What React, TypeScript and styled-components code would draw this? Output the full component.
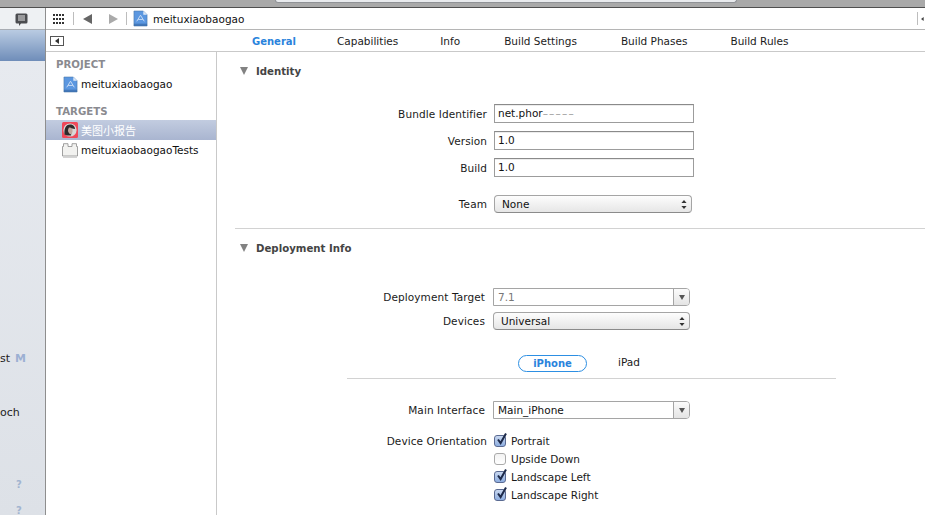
import React from "react";
import styled, { createGlobalStyle } from "styled-components";

const Global = createGlobalStyle`
  html, body { margin: 0; padding: 0; background: #fff; overflow: hidden; }
  body { font-family: "DejaVu Sans", "Noto Sans CJK SC", sans-serif; font-size: 10.5px; color: #1a1a1a; }
  #root { width: 925px; height: 515px; overflow: hidden; }
`;

const Page = styled.div`
  width: 925px; height: 515px; display: flex; flex-direction: column; overflow: hidden;
`;
const TitleStrip = styled.div`
  height: 8px; flex: none; background: #a9a9a9; border-bottom: 1px solid #4f4f4f; box-sizing: border-box; padding-left: 275px;
`;
const TitleField = styled.div`
  width: 462px; height: 3px; background: #e9ebee; border: 1px solid #8f9296; border-top: 0; border-radius: 0 0 3px 3px; box-sizing: border-box;
`;
const Body = styled.div`
  flex: 1; display: flex; min-height: 0;
`;
const Rail = styled.aside`
  width: 46px; flex: none; box-sizing: border-box; border-right: 1px solid #8e8e8e; display: flex; flex-direction: column;
  background: linear-gradient(#e8ebf0, #dde1e7); overflow: hidden;
`;
const RailTop = styled.div`
  height: 22px; flex: none; background: #eef1f3; display: flex; align-items: center; justify-content: center; padding: 3px 2px 0 0; border-bottom: 1px solid #a8adb3; box-sizing: border-box;
`;
const RailSelection = styled.div`
  height: 31px; flex: none; background: linear-gradient(#b9cbe2, #6f8db9);
`;
const RailText = styled.div<{ $top: number }>`
  margin-top: ${(p) => p.$top}px; display: flex; gap: 5px; height: 14px; line-height: 14px; white-space: nowrap; color: #222; font-size: 11px;
`;
const RailBadge = styled.span`
  color: #9cb0d3; font-weight: bold;
`;
const RailHelp = styled.div<{ $top: number }>`
  margin-top: ${(p) => p.$top}px; height: 14px; line-height: 14px; padding-left: 16px; color: #a2b4d0; font-weight: bold; font-size: 10px;
`;
const Main = styled.div`
  flex: 1; display: flex; flex-direction: column; min-width: 0;
`;
const Toolbar = styled.div`
  height: 22px; flex: none; display: flex; align-items: center; box-sizing: border-box; border-bottom: 1px solid #b5b5b5; padding-left: 7px;
`;
const Sep = styled.div<{ $l: number; $r: number }>`
  width: 1px; height: 13px; background: #bdbdbd; margin: 0 ${(p) => p.$r}px 0 ${(p) => p.$l}px;
`;
const Crumb = styled.span`
  color: #111; margin-left: 5px;
`;
const ToolbarEnd = styled.div`
  margin-left: auto; display: flex; align-items: center; height: 13px; border-left: 1px solid #bdbdbd; padding-left: 3px; width: 4px; overflow: hidden;
`;
const TabBar = styled.div`
  height: 22px; flex: none; display: flex; align-items: center; box-sizing: border-box; border-bottom: 1px solid #c9c9c9; padding-left: 4px; padding-top: 1px;
`;
const Collapse = styled.div`
  width: 12px; height: 8px; border: 1px solid #555; display: flex; align-items: center; justify-content: center; margin-right: 188px;
`;
const Tab = styled.span<{ $active?: boolean; $gap: number }>`
  margin-right: ${(p) => p.$gap}px; white-space: nowrap; font-weight: ${(p) => (p.$active ? "bold" : "normal")}; font-size: ${(p) => (p.$active ? "10px" : "10.5px")}; color: ${(p) => (p.$active ? "#2a83dc" : "#1c1c1c")};
`;
const Split = styled.div`
  flex: 1; display: flex; min-height: 0;
`;
const Navigator = styled.nav`
  width: 171px; flex: none; box-sizing: border-box; border-right: 1px solid #c9c9c9; display: flex; flex-direction: column; padding-top: 6px;
`;
const NavHead = styled.div<{ $top?: number }>`
  margin-top: ${(p) => p.$top ?? 0}px; padding-left: 10px; height: 14px; line-height: 14px; font-weight: bold; color: #8a8a8f; font-size: 10.2px;
`;
const NavRow = styled.div<{ $selected?: boolean; $pad: number; $top?: number }>`
  height: 20px; margin-top: ${(p) => p.$top ?? 0}px; display: flex; align-items: center; gap: 3px; padding-left: ${(p) => p.$pad}px; box-sizing: border-box; white-space: nowrap;
  font-size: ${(p) => (p.$selected ? "11px" : "10.5px")};
  color: ${(p) => (p.$selected ? "#fff" : "#111")};
  background: ${(p) => (p.$selected ? "linear-gradient(#c2cce0, #a9b5d0)" : "transparent")};
`;
const Content = styled.section`
  flex: 1; min-width: 0; display: flex; flex-direction: column;
`;
const SectionHead = styled.div<{ $top: number }>`
  margin-top: ${(p) => p.$top}px; margin-left: 23px; display: flex; align-items: center; gap: 8px; height: 14px; font-weight: bold; color: #444; font-size: 10.2px;
`;
const Tri = styled.span`
  width: 0; height: 0; border-left: 4.5px solid transparent; border-right: 4.5px solid transparent; border-top: 8px solid #828282;
`;
const Row = styled.div<{ $top: number; $narrow?: boolean }>`
  margin-top: ${(p) => p.$top}px; display: grid; grid-template-columns: ${(p) => (p.$narrow ? 268 : 270)}px auto; column-gap: ${(p) => (p.$narrow ? 8 : 7)}px; align-items: center; justify-content: start;
`;
const Label = styled.label<{ $start?: boolean }>`
  text-align: right; white-space: nowrap; color: #1a1a1a; letter-spacing: 0.1px;
  ${(p) => (p.$start ? "align-self: start; line-height: 18px;" : "")}
`;
const Field = styled.div`
  width: 200px; height: 19px; box-sizing: border-box; border: 1px solid #9c9c9c; border-top-color: #8a8a8a; box-shadow: inset 0 1px 0 #ececec; padding-left: 3px; line-height: 17px; background: #fff; color: #111; white-space: nowrap;
`;
const Muted = styled.span`
  color: #999; letter-spacing: 1.2px;
`;
const Popup = styled.div<{ $w: number }>`
  width: ${(p) => p.$w}px; height: 18px; box-sizing: border-box; border: 1px solid #a5a5a5; border-bottom-color: #8b8b8b; border-radius: 4px; background: linear-gradient(#fdfdfd, #e6e6e6);
  display: flex; align-items: center; justify-content: space-between; padding: 0 4px 0 7px; color: #111;
`;
const Combo = styled.div<{ $w: number }>`
  width: ${(p) => p.$w}px; height: 18px; box-sizing: border-box; border: 1px solid #a5a5a5; border-radius: 0 4px 4px 0; background: #fff; display: flex; align-items: stretch;
`;
const ComboText = styled.div<{ $muted?: boolean }>`
  flex: 1; padding-left: 4px; line-height: 16px; color: ${(p) => (p.$muted ? "#777" : "#111")};
`;
const ComboButton = styled.div`
  width: 15px; border-left: 1px solid #a5a5a5; background: linear-gradient(#fbfbfb, #e4e4e4); border-radius: 0 3px 3px 0; display: flex; align-items: center; justify-content: center;
`;
const Down = styled.span`
  width: 0; height: 0; border-left: 3.5px solid transparent; border-right: 3.5px solid transparent; border-top: 5px solid #555;
`;
const Divider = styled.div<{ $top: number; $left: number; $width?: number }>`
  margin-top: ${(p) => p.$top}px; margin-left: ${(p) => p.$left}px; height: 1px; background: #d2d2d2; flex: none;
  ${(p) => (p.$width ? `width: ${p.$width}px;` : "")}
`;
const DeviceTabs = styled.div`
  margin-top: 24px; display: flex; align-items: center; padding-left: 301px; height: 18px;
`;
const Pill = styled.div`
  width: 69px; height: 17px; box-sizing: border-box; border: 1px solid #2d8fe3; border-radius: 9px; text-align: center; line-height: 15px; font-weight: bold; color: #2a83dc; font-size: 10px;
`;
const Plain = styled.span`
  margin-left: 31px; margin-top: -2px;
`;
const Checks = styled.div`
  display: flex; flex-direction: column;
`;
const CheckRow = styled.div`
  display: flex; align-items: center; height: 18px; gap: 5px; white-space: nowrap;
`;
const Box = styled.span<{ $on?: boolean }>`
  width: 12px; height: 12px; box-sizing: border-box; border: 1px solid ${(p) => (p.$on ? "#5a6a92" : "#aaa")}; border-radius: 3px; position: relative; flex: none;
  background: ${(p) => (p.$on ? "linear-gradient(#c9d8f0, #8eaee0)" : "linear-gradient(#f2f2f2, #ffffff)")};
`;
const Tick = styled.svg`
  position: absolute; left: 0; top: -4px; width: 13px; height: 14px;
`;

const ProjectIcon = () => (
  <svg width="15" height="17" viewBox="0 0 16 17">
    <path d="M1 .5h10l4 4v12H1z" fill="#5b97e0" stroke="#4a76a8" strokeWidth=".6" />
    <path d="M11 .5l4 4h-4z" fill="#dce8f6" />
    <rect x="1" y="14" width="14" height="2.5" fill="#2f5f9a" opacity=".55" />
    <path d="M4 11.500L8 5l4 6.500M5.500 9.500h5" stroke="#d5e5f8" strokeWidth=".9" fill="none" />
  </svg>
);
const AppIcon = () => (
  <svg width="16" height="16" viewBox="0 0 16 16">
    <rect width="16" height="16" rx="1.5" fill="#f0485a" />
    <circle cx="8" cy="8" r="6.6" fill="#d8d8d8" />
    <path d="M2.500 12.500C2 7 3.500 2.500 8 2.500c3 0 5 2 5 4.500l-3-.5-1 7H5z" fill="#2f2a2c" />
    <path d="M7.500 5.500c2 0 3.500 1.500 3 4s-1.500 3-2.500 2.500S6 9.500 6 8.500s.5-3 1.500-3z" fill="#c2a79e" />
  </svg>
);
const BundleIcon = () => (
  <svg width="16" height="15" viewBox="0 0 16 15">
    <path d="M.5 3.500V13h15V3.500h-1V.7h-4.500v2.800H6V.7H1.500v2.800z" fill="#f2f2f0" stroke="#8a8a8a" strokeWidth=".8" />
    <path d="M1 14.400h14" stroke="#cfcfcf" />
  </svg>
);
const Stepper = () => (
  <svg width="6" height="9" viewBox="0 0 6 9">
    <path d="M3 0l2.600 3H.4zM3 9L.4 6h5.200z" fill="#333" />
  </svg>
);
const Check = () => (
  <Tick viewBox="0 0 13 14">
    <path d="M3 7.500l2.600 3.600L11 1.500" stroke="#1d2a4a" strokeWidth="2" fill="none" />
  </Tick>
);

export default function App() {
  return (
    <Page>
      <Global />
      <TitleStrip><TitleField /></TitleStrip>
      <Body>
        <Rail>
          <RailTop>
            <svg width="13" height="14" viewBox="0 0 13 14">
              <path d="M2 .5h9a1.500 1.500 0 0 1 1.500 1.500v7a1.500 1.500 0 0 1-1.500 1.500H6L4 13v-2.500H2A1.500 1.500 0 0 1 .5 9V2A1.500 1.500 0 0 1 2 .5z" fill="#4b4d50" />
              <path d="M3 3h7M3 5h7M3 7h7" stroke="#e8e8e8" />
            </svg>
          </RailTop>
          <RailSelection />
          <RailText $top={291}>st<RailBadge>M</RailBadge></RailText>
          <RailText $top={40}>och</RailText>
          <RailHelp $top={58}>?</RailHelp>
          <RailHelp $top={12}>?</RailHelp>
        </Rail>
        <Main>
          <Toolbar>
            <svg width="11" height="10" viewBox="0 0 11 10">
              <path d="M0 0h2v2H0zM3 0h2v2H3zM6 0h2v2H6zM9 0h2v2H9zM0 4h2v2H0zM3 4h2v2H3zM6 4h2v2H6zM9 4h2v2H9zM0 8h2v2H0zM3 8h2v2H3zM6 8h2v2H6zM9 8h2v2H9z" fill="#333" />
            </svg>
            <Sep $l={9} $r={9} />
            <svg width="9" height="10" viewBox="0 0 9 10"><path d="M9 0v10L0 5z" fill="#666" /></svg>
            <svg width="9" height="10" viewBox="0 0 9 10" style={{ marginLeft: 17 }}><path d="M0 0v10l9-5z" fill="#aaa" /></svg>
            <Sep $l={8} $r={6} />
            <ProjectIcon />
            <Crumb>meituxiaobaogao</Crumb>
            <ToolbarEnd>
              <svg width="6" height="6" viewBox="0 0 6 6"><path d="M4 0v6L0 3z" fill="#444" /></svg>
            </ToolbarEnd>
          </Toolbar>
          <TabBar>
            <Collapse>
              <svg width="5" height="6" viewBox="0 0 5 6"><path d="M4 0v6L0 3z" fill="#333" /></svg>
            </Collapse>
            <Tab $active $gap={41}>General</Tab>
            <Tab $gap={42}>Capabilities</Tab>
            <Tab $gap={44}>Info</Tab>
            <Tab $gap={44}>Build Settings</Tab>
            <Tab $gap={43}>Build Phases</Tab>
            <Tab $gap={0}>Build Rules</Tab>
          </TabBar>
          <Split>
            <Navigator>
              <NavHead>PROJECT</NavHead>
              <NavRow $pad={17} $top={2}><ProjectIcon />meituxiaobaogao</NavRow>
              <NavHead $top={11}>TARGETS</NavHead>
              <NavRow $selected $pad={16} $top={1}><AppIcon />美图小报告</NavRow>
              <NavRow $pad={16}><BundleIcon />meituxiaobaogaoTests</NavRow>
            </Navigator>
            <Content>
              <SectionHead $top={12}><Tri />Identity</SectionHead>
              <Row $top={26}><Label>Bundle Identifier</Label><Field>net.phor<Muted>–––––</Muted></Field></Row>
              <Row $top={8}><Label>Version</Label><Field>1.0</Field></Row>
              <Row $top={8}><Label>Build</Label><Field>1.0</Field></Row>
              <Row $top={18}><Label>Team</Label><Popup $w={198}>None<Stepper /></Popup></Row>
              <Divider $top={15} $left={18} />
              <SectionHead $top={12}><Tri />Deployment Info</SectionHead>
              <Row $top={33} $narrow><Label>Deployment Target</Label><Combo $w={197}><ComboText $muted>7.1</ComboText><ComboButton><Down /></ComboButton></Combo></Row>
              <Row $top={6} $narrow><Label>Devices</Label><Popup $w={197}>Universal<Stepper /></Popup></Row>
              <DeviceTabs><Pill>iPhone</Pill><Plain>iPad</Plain></DeviceTabs>
              <Divider $top={6} $left={130} $width={489} />
              <Row $top={22} $narrow><Label>Main Interface</Label><Combo $w={197}><ComboText>Main_iPhone</ComboText><ComboButton><Down /></ComboButton></Combo></Row>
              <Row $top={13}>
                <Label $start>Device Orientation</Label>
                <Checks>
                  <CheckRow><Box $on><Check /></Box>Portrait</CheckRow>
                  <CheckRow><Box />Upside Down</CheckRow>
                  <CheckRow><Box $on><Check /></Box>Landscape Left</CheckRow>
                  <CheckRow><Box $on><Check /></Box>Landscape Right</CheckRow>
                </Checks>
              </Row>
            </Content>
          </Split>
        </Main>
      </Body>
    </Page>
  );
}
